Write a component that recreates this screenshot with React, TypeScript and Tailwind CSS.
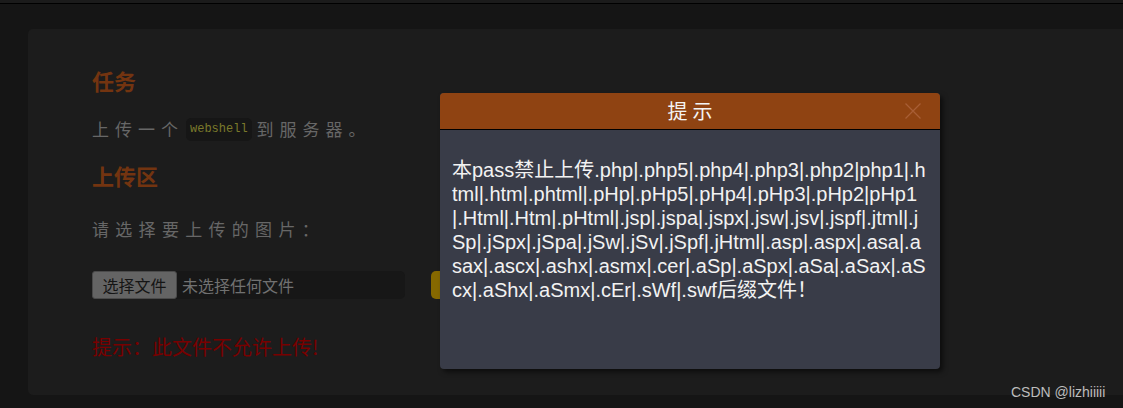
const cjk = "font-['Noto_Sans_CJK_SC',sans-serif]";

// line breaks as they fall in the dialog
const msgLines = [
  "本pass禁止上传.php|.php5|.php4|.php3|.php2|php1|.h",
  "tml|.htm|.phtml|.pHp|.pHp5|.pHp4|.pHp3|.pHp2|pHp1",
  "|.Html|.Htm|.pHtml|.jsp|.jspa|.jspx|.jsw|.jsv|.jspf|.jtml|.j",
  "Sp|.jSpx|.jSpa|.jSw|.jSv|.jSpf|.jHtml|.asp|.aspx|.asa|.a",
  "sax|.ascx|.ashx|.asmx|.cer|.aSp|.aSpx|.aSa|.aSax|.aS",
  "cx|.aShx|.aSmx|.cEr|.sWf|.swf后缀文件！",
];

function Modal() {
  return (
    <div className="absolute left-[440px] top-[93px] w-[500px] h-[276px] rounded-[4px] overflow-hidden bg-[#393c48] shadow-[3px_3px_5px_rgba(0,0,0,0.55)]">
      <div className="relative h-[37px] bg-[#8f4312] border-b border-black flex items-center justify-center">
        <span className={`${cjk} text-[20px] text-[#f4f4f4] tracking-[5px] pl-[5px]`}>提示</span>
        <svg
          className="absolute right-[19px] top-[10px]"
          width="16"
          height="16"
          viewBox="0 0 16 16"
          fill="none"
          stroke="#a85e36"
          strokeWidth="1.3"
        >
          <path d="M0.5 0.5 L15.5 15.5 M15.5 0.5 L0.5 15.5" />
        </svg>
      </div>
      <div className="px-[12px] pt-[28px] text-[20px] leading-[24px] text-[#f2f2f2] whitespace-nowrap font-['Liberation_Sans','Noto_Sans_CJK_SC',sans-serif]">
        {msgLines.map((line) => (
          <div key={line}>{line}</div>
        ))}
      </div>
    </div>
  );
}

export default function App() {
  return (
    <div className="relative w-[1123px] h-[408px] overflow-hidden bg-[#151515]">
      <div className="h-[4px] bg-[#1b1b1b] border-b border-black" />
      <div className="pl-[28px] pt-[25px]">
        <div className="h-[366px] rounded-l-[5px] bg-[#1c1c1c] pl-[64px] pt-[36px]">
          <h2 className={`${cjk} text-[22px] leading-[30px] font-bold text-[#733410]`}>任务</h2>
          <p className={`${cjk} mt-[22px] text-[17px] leading-[24px] text-[#676767] tracking-[6px] flex items-center`}>
            <span>上传一个</span>
            <code className="ml-[2px] px-[4px] h-[23px] leading-[23px] rounded-[5px] bg-[#161616] text-[#7b7a2b] text-[12px] tracking-normal font-['Liberation_Mono',monospace]">
              webshell
            </code>
            <span className="ml-[5px]">到服务器。</span>
          </p>
          <h2 className={`${cjk} mt-[19px] text-[22px] leading-[30px] font-bold text-[#733410]`}>上传区</h2>
          <p className={`${cjk} mt-[27px] text-[17px] leading-[24px] text-[#676767] tracking-[6.3px]`}>请选择要上传的图片：</p>
          <div className="mt-[30px] flex items-center gap-[26px]">
            <div className="w-[313px] h-[28px] rounded-[5px] bg-[#171717] flex items-center">
              <span className={`${cjk} h-[28px] w-[85px] flex items-center justify-center rounded-[3px] border border-[#4a4a4a] bg-[#646464] text-[#151515] text-[16px]`}>
                选择文件
              </span>
              <span className={`${cjk} ml-[5px] text-[16px] text-[#717171]`}>未选择任何文件</span>
            </div>
            <div className="w-[30px] h-[28px] rounded-[5px] bg-[#866800]" />
          </div>
          <p className={`${cjk} mt-[36px] text-[20px] leading-[24px] text-[#780000]`}>提示：此文件不允许上传!</p>
        </div>
      </div>
      <Modal />
      <div className="absolute left-[1011px] top-[382px] text-[14px] text-[#bdbdbd] font-['Liberation_Sans',sans-serif]">
        CSDN @lizhiiiii
      </div>
    </div>
  );
}
